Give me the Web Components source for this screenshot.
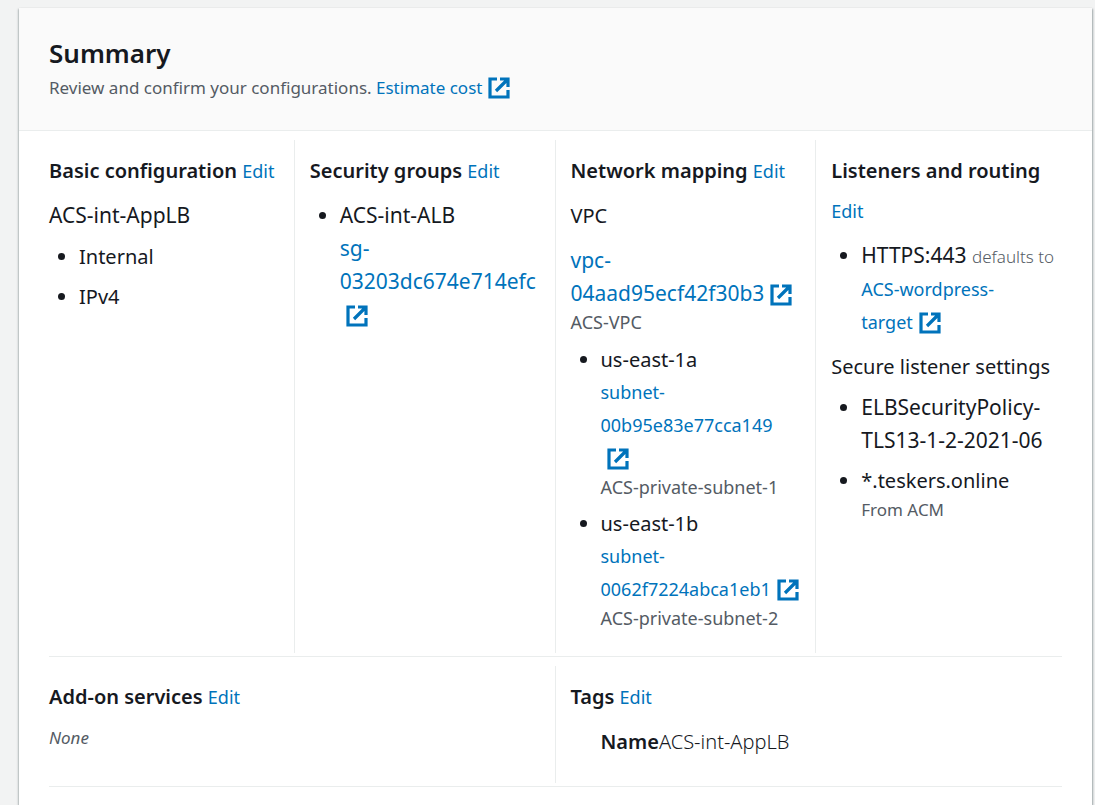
<!DOCTYPE html>
<html lang="en">
<head>
<meta charset="utf-8">
<title>Summary</title>
<style>
html { background: #f2f3f3; }
body { margin: 0; padding: 8px 3px 0 19px; min-height: 100vh; box-sizing: border-box; display: flex; flex-direction: column;
  font-family: "Noto Sans", "Open Sans", sans-serif; color: #16191f; }
</style>
</head>
<body>
<summary-panel></summary-panel>
<script>
const define = (name, html) => customElements.define(name, class extends HTMLElement {
  constructor() {
    super();
    const t = document.createElement('template');
    t.innerHTML = html;
    this.attachShadow({ mode: 'open' }).append(t.content.cloneNode(true));
  }
});

customElements.define('ext-link', class extends HTMLElement {
  connectedCallback() {
    if (this.shadowRoot) return;
    const icon = this.hasAttribute('external')
      ? '<wbr><svg viewBox="0 0 22 22" aria-hidden="true"><path d="M9 2H2v18h18v-7"/><path d="M12 2h8v8M20 2 8 14"/></svg>' : '';
    this.attachShadow({ mode: 'open' }).innerHTML = `<style>
      :host { display: inline; font-size: var(--link-size, 18px); }
      a { color: #0073bb; text-decoration: none; }
      a:hover { text-decoration: underline; }
      svg { width: 22px; height: 22px; vertical-align: -5px; fill: none; stroke: currentColor; stroke-width: 3.2; margin-left: 6px; }
    </style><a href="#"><slot></slot>${icon}</a>`;
  }
});

define('config-row', `<style>
  :host { display: block; margin: 0 30px; border-bottom: 1px solid #eaeded; padding: 9px 0 3px; }
  div { display: grid; grid-template-columns: repeat(4, minmax(0, 1fr)); margin: 0 -15px; }
</style><div><slot></slot></div>`);

define('config-section', `<style>
  :host { display: block; border-right: 1px solid #eaeded; padding: 11px 14px 22px 15px; font-size: 20px; line-height: 33px; }
  :host(:last-child) { border-right: 0; }
  :host([wide]) { grid-column: span 2; padding-bottom: 25px; }
  header { line-height: 40px; margin-bottom: 8px; }
  h3 { display: inline; font-size: 20px; font-weight: 600; margin: 0; }
</style><header><h3><slot name="title"></slot></h3> <slot name="action"></slot></header><slot></slot>`);

define('bullet-list', `<style>
  :host { display: block; margin-top: 8px; }
  :host([first]) { margin-top: 0; }
  div { display: flex; flex-direction: column; gap: 7px; }
</style><div role="list"><slot></slot></div>`);

define('bullet-item', `<style>
  :host { display: list-item; list-style: disc; margin-left: 30px; }
</style><slot></slot>`);

define('sub-text', `<style>
  :host { display: block; font-size: 17px; line-height: 25px; color: #545b64; }
  :host([resource]) { font-size: 18px; }
  :host([italic]) { font-style: italic; }
</style><slot></slot>`);

define('tag-pair', `<style>
  :host { display: block; padding-left: 30px; font-weight: 300; }
  b { font-weight: 600; }
</style><b><slot name="key"></slot></b><slot></slot>`);

define('text-line', `<style>
  :host { display: block; }
  :host([resource]) { font-size: 21px; }
  :host([small]) { font-size: 18px; }
  :host([spaced]) { margin-top: 12px; }
  :host([after]) { margin-top: 11px; }
</style><slot></slot>`);

define('light-text', `<style>:host { font-size: 17px; font-weight: 300; color: #545b64; }</style><slot></slot>`);

define('summary-panel', `<style>
  :host { display: block; flex: 1; background: #fff; box-shadow: 0 1px 1px rgba(0,28,36,.3), 1px 1px 2px rgba(0,28,36,.3), -1px 1px 2px rgba(0,28,36,.2); }
  .head { background: #fafafa; border-bottom: 1px solid #eaeded; padding: 28px 30px 26px; }
  h2 { margin: 0; font-size: 26px; line-height: 35px; font-weight: 600; }
  p { margin: 0; font-size: 17px; line-height: 33px; color: #545b64; --link-size: 17px; }
  .large { --link-size: 21px; }
</style>
<section>
  <div class="head"><h2>Summary</h2><p>Review and confirm your configurations. <ext-link external>Estimate cost</ext-link></p></div>
  <config-row>
    <config-section><span slot="title">Basic configuration</span><ext-link slot="action">Edit</ext-link>
      <text-line resource>ACS-int-AppLB</text-line>
      <bullet-list><bullet-item>Internal</bullet-item><bullet-item>IPv4</bullet-item></bullet-list>
    </config-section>
    <config-section><span slot="title">Security groups</span><ext-link slot="action">Edit</ext-link>
      <bullet-list first><bullet-item><text-line resource>ACS-int-ALB</text-line><text-line resource><ext-link class="large" external>sg-<br>03203dc674e714efc</ext-link></text-line></bullet-item></bullet-list>
    </config-section>
    <config-section><span slot="title">Network mapping</span><ext-link slot="action">Edit</ext-link>
      <text-line>VPC</text-line>
      <text-line resource spaced><ext-link class="large" external>vpc-<br>04aad95ecf42f30b3</ext-link></text-line>
      <sub-text resource>ACS-VPC</sub-text>
      <bullet-list>
        <bullet-item><text-line>us-east-1a</text-line><text-line small><ext-link external>subnet-<br>00b95e83e77cca149<br></ext-link></text-line><sub-text resource>ACS-private-subnet-1</sub-text></bullet-item>
        <bullet-item><text-line>us-east-1b</text-line><text-line small><ext-link external>subnet-<br>0062f7224abca1eb1</ext-link></text-line><sub-text resource>ACS-private-subnet-2</sub-text></bullet-item>
      </bullet-list>
    </config-section>
    <config-section><span slot="title">Listeners and routing</span><ext-link slot="action">Edit</ext-link>
      <bullet-list first><bullet-item><text-line resource>HTTPS:443 <light-text>defaults to</light-text></text-line><text-line small><ext-link external>ACS-wordpress-<br>target</ext-link></text-line></bullet-item></bullet-list>
      <text-line after>Secure listener settings</text-line>
      <bullet-list><bullet-item><text-line resource>ELBSecurityPolicy-<br>TLS13-1-2-2021-06</text-line></bullet-item><bullet-item>*.teskers.online<sub-text>From ACM</sub-text></bullet-item></bullet-list>
    </config-section>
  </config-row>
  <config-row>
    <config-section wide><span slot="title">Add-on services</span><ext-link slot="action">Edit</ext-link>
      <sub-text italic>None</sub-text>
    </config-section>
    <config-section wide><span slot="title">Tags</span><ext-link slot="action">Edit</ext-link>
      <tag-pair><span slot="key">Name</span>ACS-int-AppLB</tag-pair>
    </config-section>
  </config-row>
</section>`);
</script>
</body>
</html>
